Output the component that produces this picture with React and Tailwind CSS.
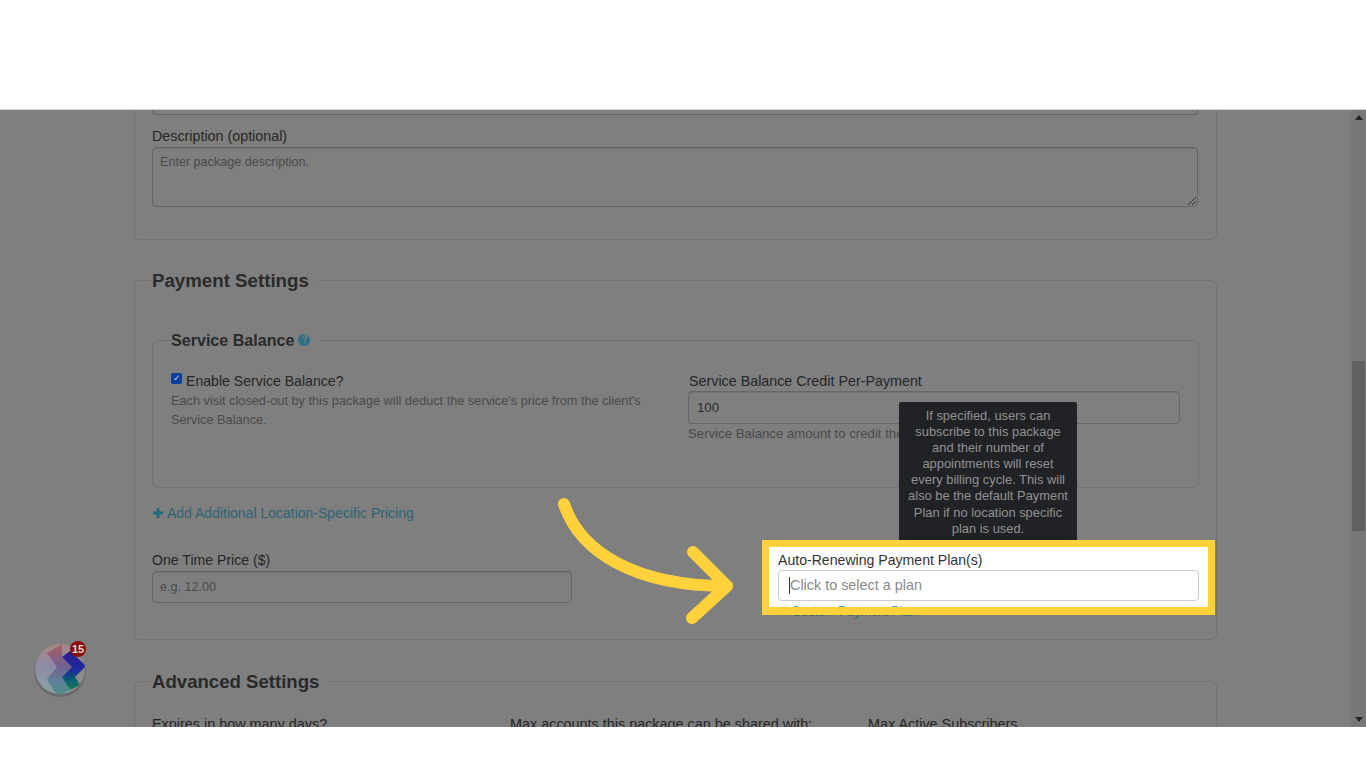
import React from 'react';

const font = { fontFamily: '"Liberation Sans", Arial, sans-serif' };

function PlusIcon({ size = 12, color }) {
  return (
    <svg width={size} height={size} viewBox="0 0 12 12" className="shrink-0">
      <path d="M6 1V11M1 6H11" stroke={color} strokeWidth="3" />
    </svg>
  );
}

function Logo() {
  return (
    <div className="absolute left-[33px] top-[640px] w-[56px] h-[58px]">
      <svg width="56" height="58" viewBox="0 0 56 58">
        <defs>
          <clipPath id="disc">
            <circle cx="27" cy="29" r="25" />
          </clipPath>
          <linearGradient id="base" x1="0" y1="0" x2="0" y2="1">
            <stop offset="0" stopColor="#a58a86" />
            <stop offset="0.45" stopColor="#8d8aa5" />
            <stop offset="1" stopColor="#86a3a3" />
          </linearGradient>
          <linearGradient id="mid" x1="0" y1="0" x2="0" y2="1">
            <stop offset="0" stopColor="#a8605e" />
            <stop offset="0.4" stopColor="#75608c" />
            <stop offset="0.7" stopColor="#5f7f9a" />
            <stop offset="1" stopColor="#4f8f82" />
          </linearGradient>
          <linearGradient id="right" x1="0" y1="0" x2="0" y2="1">
            <stop offset="0" stopColor="#2a1a90" />
            <stop offset="0.5" stopColor="#1c2b9c" />
            <stop offset="0.75" stopColor="#0b5f6f" />
            <stop offset="1" stopColor="#1a7a5c" />
          </linearGradient>
        </defs>
        <circle cx="27" cy="31" r="26" fill="#5a5a5a" opacity="0.55" />
        <circle cx="27" cy="29" r="25" fill="url(#base)" />
        <g clipPath="url(#disc)">
          <path d="M39 12H54V54H39Z" fill="#8b8b8b" />
          <path d="M14 13L29 4V17L39 27L29 37L37 50L24 56L14 39L24 27Z" fill="url(#mid)" />
          <path d="M29 17L37 11L53 26L42 37L47 45L37 50L29 37L39 27Z" fill="url(#right)" />
        </g>
      </svg>
      <div className="absolute left-[37px] top-[1px] w-[16px] h-[16px] rounded-full bg-[#8c0d0d] text-[#d8d8d8] text-[11px] font-bold leading-[16px] text-center">15</div>
    </div>
  );
}

function Arrow() {
  return (
    <svg className="absolute left-[550px] top-[490px]" width="190" height="140" viewBox="0 0 190 140">
      <g fill="none" stroke="#ffd23c" strokeWidth="12" strokeLinecap="round" strokeLinejoin="round">
        <path d="M14 14C30 62 85 96 177 96" />
        <path d="M143 62L177 96L142 128" />
      </g>
    </svg>
  );
}

function Tooltip() {
  return (
    <div className="absolute left-[899px] top-[402px] w-[178px] h-[138px] bg-[#212226] rounded-t-[2px] px-[8px] pt-[6px] text-center text-[12.9px] leading-[16.1px] text-[#929292]">
      If specified, users can subscribe to this package and their number of appointments will reset every billing cycle. This will also be the default Payment Plan if no location specific plan is used.
    </div>
  );
}

function Highlight() {
  return (
    <div className="absolute left-[762px] top-[540px] w-[453px] h-[75px] border-[7px] border-b-[8px] border-[#ffd23c] bg-white overflow-hidden">
      <div className="pl-[9px] pt-[5px]">
        <div className="text-[14.1px] leading-[16px] text-[#333]">Auto-Renewing Payment Plan(s)</div>
        <div className="mt-[2px] w-[421px] h-[31px] border border-[#ccc] rounded-[4px] flex items-center pl-[10px]">
          <span className="w-px h-[17px] bg-[#333]" />
          <span className="text-[14.4px] text-[#8a8a8a]">Click to select a plan</span>
        </div>
        <div className="mt-[2px] pl-[2px] flex items-center gap-[4px] text-[12.6px] leading-[16px] text-[#4f9cb0] whitespace-nowrap">
          <PlusIcon size={7} color="#4f9cb0" />
          Custom Payment Plan
        </div>
      </div>
    </div>
  );
}

function Field({ label, className = '', labelSize = 'text-[14.1px]', children }) {
  return (
    <div className={className}>
      <div className={`${labelSize} leading-[16px] text-[#262626]`}>{label}</div>
      {children}
    </div>
  );
}

function Box({ children, className = '' }) {
  return (
    <div className={`border border-[#666] rounded-[4px] shadow-[inset_0_1px_1px_rgba(0,0,0,0.1)] flex items-center pl-[7px] text-[12.6px] ${className}`}>
      {children}
    </div>
  );
}

export default function App() {
  return (
    <div className="relative w-[1366px] h-[768px] bg-white overflow-hidden" style={font}>
      <div className="h-[110px] bg-white border-b border-[#cfcfcf]" />
      <div className="h-[617px] bg-[#7f7f7f] flex overflow-hidden">
        <main className="w-[1351px] shrink-0 pl-[134px] pr-[134px] overflow-hidden">
          <div className="border-x border-b border-[#727272] rounded-b-[6px] h-[130px] pl-[17px] pr-[18px]">
            <div className="h-[5px] border-x border-b border-[#666] rounded-b-[4px]" />
            <Field label="Description (optional)" labelSize="text-[14.3px]" className="pt-[13px]">
              <div className="relative mt-[3px] h-[60px] border border-[#666] rounded-[4px] shadow-[inset_0_1px_1px_rgba(0,0,0,0.1)] pl-[7px] pt-[6px] text-[12.6px] leading-[16px] text-[#4a4a4a]">
                Enter package description.
                <svg className="absolute right-0 bottom-0" width="10" height="10" viewBox="0 0 10 10" stroke="#333" strokeWidth="1">
                  <path d="M1 9L9 1M5 9L9 5" />
                </svg>
              </div>
            </Field>
          </div>

          <fieldset className="mt-[26px] h-[374px] border border-[#727272] rounded-[6px] px-[17px] min-w-0">
            <legend className="translate-y-px text-[18.7px] leading-[28px] font-bold text-[#2a2a2a] pr-[10px]">Payment Settings</legend>

            <fieldset className="mt-[34px] h-[160px] border border-[#727272] rounded-[6px] px-[18px] min-w-0">
              <legend className="flex items-center gap-[4px] text-[16.1px] leading-[24px] font-bold text-[#2a2a2a] pr-[10px]">
                Service Balance
                <span className="w-[12px] h-[12px] rounded-full bg-[#2b7183] text-[#7f7f7f] text-[10px] leading-[12px] text-center">?</span>
              </legend>
              <div className="flex pt-[21px]">
                <div className="w-[517px]">
                  <label className="flex items-center gap-[4px] text-[14.1px] leading-[16px] text-[#262626]">
                    <span className="w-[11px] h-[11px] -mt-[6px] rounded-[2px] bg-[#0a3f9c] text-[#cfcfcf] text-[9px] leading-[11px] text-center">✓</span>
                    Enable Service Balance?
                  </label>
                  <p className="mt-[3px] w-[480px] text-[12.75px] leading-[18.5px] text-[#4a4a4a]">
                    Each visit closed-out by this package will deduct the service's price from the client's Service Balance.
                  </p>
                </div>
                <Field label="Service Balance Credit Per-Payment" labelSize="text-[14.3px] pl-px" className="w-[492px]">
                  <Box className="mt-[2px] h-[33px] pt-px pl-[8px] text-[13.2px] text-[#2c2c2c]">100</Box>
                  <p className="mt-[1px] text-[13.2px] leading-[18px] text-[#4a4a4a] whitespace-nowrap">Service Balance amount to credit the user per payment.</p>
                </Field>
              </div>
            </fieldset>

            <div className="mt-[16px] flex items-center gap-[3px] text-[14px] leading-[18px] text-[#2e6373]">
              <PlusIcon color="#1f6a7c" />
              Add Additional Location-Specific Pricing
            </div>

            <div className="mt-[30px] flex">
              <Field label="One Time Price ($)" className="w-[626px]">
                <Box className="mt-[3px] w-[420px] h-[32px] text-[#4a4a4a]">e.g. 12.00</Box>
              </Field>
              <Field label="Auto-Renewing Payment Plan(s)" className="w-[420px]">
                <Box className="mt-[3px] h-[32px] text-[#4a4a4a]">Click to select a plan</Box>
                <div className="mt-[1px] pl-[3px] flex items-center gap-[4px] text-[12.6px] leading-[16px] text-[#2e6373] whitespace-nowrap">
                  <PlusIcon size={7} color="#1f6a7c" />
                  Custom Payment Plan
                </div>
              </Field>
            </div>
          </fieldset>

          <fieldset className="mt-[27px] h-[120px] border border-[#727272] rounded-[6px] px-[17px] min-w-0">
            <legend className="translate-y-px text-[18.6px] leading-[28px] font-bold text-[#2a2a2a] pr-[10px]">Advanced Settings</legend>
            <div className="mt-[21px] flex">
              <Field label="Expires in how many days?" labelSize="text-[14.4px]" className="w-[358px]" />
              <Field label="Max accounts this package can be shared with:" labelSize="text-[14.4px]" className="w-[358px]" />
              <Field label="Max Active Subscribers" labelSize="text-[14.4px]" />
            </div>
          </fieldset>
        </main>

        <div className="w-[15px] shrink-0 bg-[#787878] flex flex-col items-center justify-between py-[5px] relative">
          <svg width="8" height="5" viewBox="0 0 8 5"><path d="M4 0L8 5H0Z" fill="#222" /></svg>
          <div className="absolute left-[1px] top-[251px] w-[13px] h-[170px] bg-[#606060]" />
          <svg width="8" height="5" viewBox="0 0 8 5"><path d="M0 0H8L4 5Z" fill="#222" /></svg>
        </div>
      </div>
      <div className="h-[41px] bg-white" />

      <Logo />
      <Arrow />
      <Tooltip />
      <Highlight />
    </div>
  );
}
